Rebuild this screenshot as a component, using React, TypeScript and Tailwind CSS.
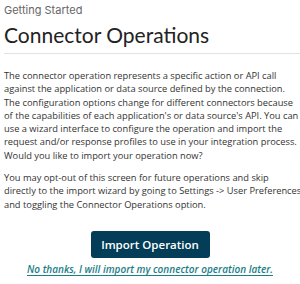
const intro = [
  "The connector operation represents a specific action or API call",
  "against the application or data source defined by the connection.",
  "The configuration options change for different connectors because",
  "of the capabilities of each application's or data source's API. You can",
  "use a wizard interface to configure the operation and import the",
  "request and/or response profiles to use in your integration process.",
  "Would you like to import your operation now?",
];

const optOut = [
  "You may opt-out of this screen for future operations and skip",
  "directly to the import wizard by going to Settings -> User Preferences",
  "and toggling the Connector Operations option.",
];

export default function App() {
  return (
    <div className="h-[284px] w-[300px] overflow-hidden bg-white pl-1 text-[#333]">
      <header className="pt-[3px]">
        <p className="font-['Inter',sans-serif] text-[11px] leading-[14px] text-[#666]">
          Getting Started
        </p>
        <h1 className="mt-[5px] font-['Lato',sans-serif] text-[21px] leading-[26px] font-normal text-[#222]">
          Connector Operations
        </h1>
        <div className="mt-[5px] h-px bg-[#e3e3e3]" />
      </header>

      <div className="mt-[15px] font-['Open_Sans',sans-serif] text-[9.3px] leading-[13.3px] whitespace-nowrap text-[#333]">
        <p>
          {intro.map((line) => (
            <span key={line} className="block">
              {line}
            </span>
          ))}
        </p>
        <p className="mt-[9px]">
          {optOut.map((line) => (
            <span key={line} className="block">
              {line}
            </span>
          ))}
        </p>
      </div>

      <div className="mt-[20px] flex flex-col items-center pr-1">
        <button className="h-[27px] w-[119px] rounded-[3px] bg-[#033d58] font-['Open_Sans',sans-serif] text-[11.5px] font-semibold text-white">
          Import Operation
        </button>
        <a className="mt-[4px] font-['Open_Sans',sans-serif] text-[10px] font-semibold italic text-[#1a7e86] underline underline-offset-2">
          No thanks, I will import my connector operation later.
        </a>
      </div>
    </div>
  );
}
